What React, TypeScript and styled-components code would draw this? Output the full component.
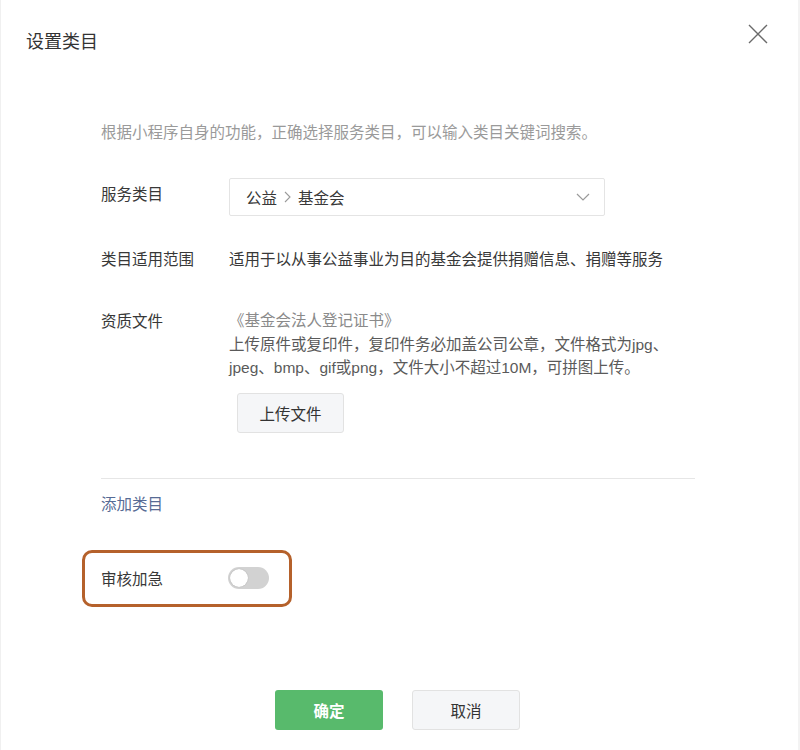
import React from "react";
import styled, { createGlobalStyle } from "styled-components";

const GlobalStyle = createGlobalStyle`
  html, body {
    margin: 0;
    padding: 0;
    background: #f3f3f3;
  }
  body {
    font-family: "Liberation Sans", "Noto Sans CJK SC", sans-serif;
    color: #353535;
  }
`;

const Dialog = styled.div`
  width: 798px;
  height: 750px;
  background: #fff;
  border-left: 1px solid #f0f0f0;
  box-sizing: border-box;
  display: flex;
  flex-direction: column;
`;

const Header = styled.div`
  display: flex;
  justify-content: space-between;
  align-items: flex-start;
  padding: 30px 28px 0 25px;
`;

const Title = styled.h1`
  margin: 0;
  font-size: 18px;
  line-height: 24px;
  font-weight: normal;
  color: #333;
`;

const CloseButton = styled.button`
  border: none;
  background: none;
  padding: 0;
  margin-top: -8px;
  width: 24px;
  height: 24px;
  cursor: pointer;
  display: flex;
  align-items: center;
  justify-content: center;
`;

const Body = styled.div`
  padding: 0 103px 0 100px;
  flex: 1;
`;

const Hint = styled.p`
  margin: 67px 0 33px;
  font-size: 15.5px;
  line-height: 24px;
  color: #9a9a9a;
`;

const Row = styled.div<{ $gap?: number }>`
  display: grid;
  grid-template-columns: 128px 1fr;
  align-items: start;
  margin-top: ${(p) => p.$gap ?? 0}px;
`;

const Label = styled.div<{ $offset?: number }>`
  font-size: 15.5px;
  line-height: 24px;
  color: #383838;
  padding-top: ${(p) => p.$offset ?? 0}px;
`;

const Select = styled.div`
  width: 376px;
  height: 38px;
  box-sizing: border-box;
  border: 1px solid #e4e4e4;
  border-radius: 2px;
  display: flex;
  align-items: center;
  padding: 0 14px 0 16px;
  font-size: 15.5px;
  color: #383838;
`;

const Crumb = styled.span`
  display: inline-flex;
  align-items: center;
  gap: 7px;
  flex: 1;
`;

const Value = styled.div`
  font-size: 15.5px;
  line-height: 24px;
  color: #383838;
`;

const Doc = styled.div`
  font-size: 15.5px;
  line-height: 23.5px;
`;

const DocName = styled.div`
  color: #8a8a8a;
`;

const DocDesc = styled.div`
  color: #5a5a5a;
`;

const GrayButton = styled.button<{ $w: number }>`
  width: ${(p) => p.$w}px;
  height: 40px;
  border: 1px solid #e2e2e2;
  border-radius: 3px;
  background: #f5f6f8;
  color: #333;
  font-family: inherit;
  font-size: 15.5px;
  cursor: pointer;
`;

const UploadWrap = styled.div`
  margin: 13px 0 0 8px;
`;

const Divider = styled.hr`
  border: none;
  border-top: 1px solid #e6e6e6;
  margin: 45px 0 0;
`;

const AddLink = styled.a`
  display: inline-block;
  margin-top: 14px;
  font-size: 15.5px;
  line-height: 24px;
  color: #576b95;
  cursor: pointer;
`;

const Highlight = styled.div`
  margin: 33px 0 0 -19px;
  width: 210px;
  height: 57px;
  box-sizing: border-box;
  border: 3px solid #b5612b;
  border-radius: 10px;
  display: flex;
  align-items: center;
  padding-left: 16px;
`;

const ToggleLabel = styled.div`
  width: 127px;
  font-size: 15.5px;
  color: #383838;
`;

const Toggle = styled.div`
  width: 41px;
  height: 22px;
  border-radius: 11px;
  background: #d2d2d2;
  position: relative;
`;

const Knob = styled.span`
  position: absolute;
  top: 2px;
  left: 2px;
  width: 18px;
  height: 18px;
  border-radius: 50%;
  background: #fff;
  box-shadow: 0 0 1px rgba(0, 0, 0, 0.3);
`;

const Footer = styled.div`
  display: flex;
  justify-content: center;
  gap: 29px;
  padding: 0 4px 20px 0;
`;

const PrimaryButton = styled.button`
  width: 108px;
  height: 40px;
  border: none;
  border-radius: 3px;
  background: #58ba6c;
  color: #fff;
  font-family: inherit;
  font-size: 15.5px;
  font-weight: bold;
  cursor: pointer;
`;

const ChevronDown = () => (
  <svg width="14" height="8" viewBox="0 0 14 8">
    <path d="M1 1l6 6 6-6" fill="none" stroke="#9a9a9a" strokeWidth="1.2" />
  </svg>
);

const ChevronRight = () => (
  <svg width="7" height="12" viewBox="0 0 7 12">
    <path d="M1 1l5 5-5 5" fill="none" stroke="#9a9a9a" strokeWidth="1.1" />
  </svg>
);

export default function App() {
  return (
    <>
      <GlobalStyle />
      <Dialog>
        <Header>
          <Title>设置类目</Title>
          <CloseButton aria-label="关闭">
            <svg width="22" height="22" viewBox="0 0 22 22">
              <path d="M2 2l18 18M20 2L2 20" stroke="#6a6a6a" strokeWidth="1.4" />
            </svg>
          </CloseButton>
        </Header>
        <Body>
          <Hint>根据小程序自身的功能，正确选择服务类目，可以输入类目关键词搜索。</Hint>
          <Row>
            <Label $offset={5}>服务类目</Label>
            <Select>
              <Crumb>
                公益
                <ChevronRight />
                基金会
              </Crumb>
              <ChevronDown />
            </Select>
          </Row>
          <Row $gap={32}>
            <Label>类目适用范围</Label>
            <Value>适用于以从事公益事业为目的基金会提供捐赠信息、捐赠等服务</Value>
          </Row>
          <Row $gap={37}>
            <Label $offset={1}>资质文件</Label>
            <div>
              <Doc>
                <DocName>《基金会法人登记证书》</DocName>
                <DocDesc>
                  上传原件或复印件，复印件务必加盖公司公章，文件格式为jpg、
                  <br />
                  jpeg、bmp、gif或png，文件大小不超过10M，可拼图上传。
                </DocDesc>
              </Doc>
              <UploadWrap>
                <GrayButton $w={107}>上传文件</GrayButton>
              </UploadWrap>
            </div>
          </Row>
          <Divider />
          <AddLink>添加类目</AddLink>
          <Highlight>
            <ToggleLabel>审核加急</ToggleLabel>
            <Toggle>
              <Knob />
            </Toggle>
          </Highlight>
        </Body>
        <Footer>
          <PrimaryButton>确定</PrimaryButton>
          <GrayButton $w={108}>取消</GrayButton>
        </Footer>
      </Dialog>
    </>
  );
}
